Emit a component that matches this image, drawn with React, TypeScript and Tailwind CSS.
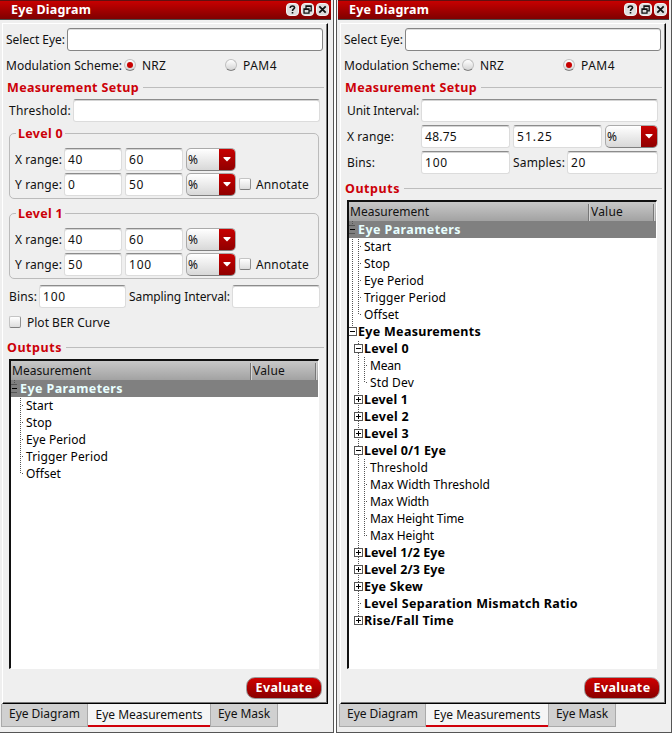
import { useLayoutEffect, useRef, useState, type ReactNode } from "react";

/** Text set to a fixed run width by evenly tracking its letters. */
function T({ children, w, className = "" }: { children: string; w: number; className?: string }) {
  const ref = useRef<HTMLSpanElement>(null);
  const [gap, setGap] = useState(0);
  useLayoutEffect(() => {
    const el = ref.current;
    if (!el) return;
    el.style.letterSpacing = "0px";
    const natural = el.getBoundingClientRect().width;
    setGap((w - natural) / children.length);
  }, [w, children]);
  return (
    <span ref={ref} className={`inline-block shrink-0 whitespace-pre leading-4 ${className}`} style={{ letterSpacing: `${gap}px` }}>
      {children}
    </span>
  );
}

function Field({ value = "", w = 0, className = "" }: { value?: string; w?: number; className?: string }) {
  return (
    <div className={`flex h-[23px] shrink-0 items-center rounded-[3px] border border-[#dcdcdc] border-t-[#8c8c8c] bg-white pl-[3px] shadow-[inset_0_1px_0_#d4d4d4] ${className}`}>
      {value && <T w={w}>{value}</T>}
    </div>
  );
}

function Combo({ className = "", arrow }: { className?: string; arrow: string }) {
  return (
    <div className={`flex h-[23px] shrink-0 overflow-hidden rounded-[5px] border border-[#aaa] border-b-[#808080] bg-gradient-to-b from-white to-[#d8d8d8] ${className}`}>
      <div className="flex flex-1 items-center pl-px"><T w={10}>%</T></div>
      <div className={`flex items-center justify-center bg-gradient-to-b from-[#c80000] to-[#900000] ${arrow}`}>
        <svg width="8" height="5" viewBox="0 0 8 5"><path d="M0.5 0H7.5V1L4 4.5L0.5 1Z" fill="#fff" /></svg>
      </div>
    </div>
  );
}

function Check() {
  return <div className="h-3 w-3 shrink-0 rounded-[2px] border border-[#c4c4c4] border-b-[#808080] border-r-[#909090] bg-gradient-to-b from-white to-[#ddd]" />;
}

function Radio({ on }: { on: boolean }) {
  return (
    <div className="flex h-3 w-3 shrink-0 items-center justify-center rounded-full border border-[#c0c0c0] border-b-[#808080] bg-gradient-to-b from-white to-[#d4d4d4]">
      {on && <div className="h-1.5 w-1.5 rounded-full bg-[#c80000]" />}
    </div>
  );
}

function Heading({ children, w }: { children: string; w: number }) {
  return (
    <div className="flex h-4 items-center pl-1 pr-[3px]">
      <T w={w} className="relative top-px text-[12.5px] font-bold text-[#cc0008]">{children}</T>
      <div className="ml-1 h-px flex-1 bg-[#bdbdbd]" />
    </div>
  );
}

function TitleButton({ children }: { children: ReactNode }) {
  return (
    <svg width="13" height="13" viewBox="0 0 13 13" fill="none" stroke="#111" className="shrink-0">
      <rect x="0.5" y="0.5" width="12" height="12" rx="3.5" fill="#dedede" stroke="#f2f2f2" />
      {children}
    </svg>
  );
}

function Level({ name, first, second, fw, sw, className }: { name: string; first: [string, string]; second: [string, string]; fw: [number, number]; sw: [number, number]; className: string }) {
  return (
    <fieldset className={`relative ml-1.5 h-[66px] w-[310px] rounded-[5px] border border-[#bbb] pl-[5px] pt-[14px] ${className}`}>
      <div className="absolute -top-[8px] left-1.5 flex bg-[#efefef] px-0.5"><T w={45} className="text-[12.5px] font-bold text-[#cc0008]">{name}</T></div>
      <div className="flex items-center">
        <T w={47}>X range:</T>
        <Field value={first[0]} w={fw[0]} className="ml-0.5 w-[58px]" />
        <Field value={first[1]} w={fw[1]} className="ml-[3px] w-[58px]" />
        <Combo className="ml-[3px] w-[50px]" arrow="w-[16px]" />
      </div>
      <div className="mt-0.5 flex items-center">
        <T w={47}>Y range:</T>
        <Field value={second[0]} w={sw[0]} className="ml-0.5 w-[58px]" />
        <Field value={second[1]} w={sw[1]} className="ml-[3px] w-[58px]" />
        <Combo className="ml-[3px] w-[50px]" arrow="w-[16px]" />
        <div className="mb-0.5 ml-[3px]"><Check /></div>
        <div className="ml-[5px] flex"><T w={53}>Annotate</T></div>
      </div>
    </fieldset>
  );
}

type Row = {
  text: string;
  w: number;
  depth: 0 | 1 | 2;
  bold?: boolean;
  box?: "plus" | "minus";
  selected?: boolean;
  /** Guide lines as [x, fromY, toY] within the 17px row. */
  lines: [number, number, number][];
  tick?: number;
};

const indent = ["w-[9px]", "w-[15px]", "w-[21px]"];

function TreeRow({ row, index }: { row: Row; index: number }) {
  const cx = row.depth === 0 ? 3 : 9;
  return (
    <div className={`flex h-[17px] items-center ${row.selected ? "bg-[#808080] text-[#e8ffff]" : "text-black"}`}>
      <svg height="17" className={`shrink-0 ${indent[row.depth]}`} shapeRendering="crispEdges" fill="none" stroke="#555">
        {row.lines.map(([x, a, b]) => (
          <path key={x} d={`M${x + 0.5} ${a}V${b}`} strokeDasharray="1 1" strokeDashoffset={(index + a) % 2} />
        ))}
        {row.tick !== undefined && <path d={`M${row.tick + 2} 8.5h1`} />}
        {row.box && !row.selected && <rect x={cx - 3.5} y="4.5" width="8" height="8" fill="#fff" />}
        {row.selected && <path d={`M0 4.5h6M0 12.5h6`} />}
        {row.box && <path d={`M${cx - 2} 8.5h5${row.box === "plus" ? `M${cx + 0.5} 6v5` : ""}`} stroke="#000" />}
      </svg>
      <T w={row.w} className={row.bold ? "text-[12.5px] font-bold" : ""}>{row.text}</T>
    </div>
  );
}

function Outputs({ rows, className }: { rows: Row[]; className: string }) {
  return (
    <div className={`ml-1.5 flex w-[310px] flex-col border-l-2 border-t-2 border-r border-b border-[#111] border-b-white border-r-white bg-white ${className}`}>
      <div className="flex h-[19px] items-center bg-gradient-to-b from-[#c8c8c8] to-[#a2a2a2]">
        <div className="flex w-[239px] pl-px"><T w={79}>Measurement</T></div>
        <div className="mt-0.5 h-[17px] w-0.5 border-l border-[#777] bg-[#d5d5d5]" />
        <div className="ml-px flex flex-1"><T w={32}>Value</T></div>
        <div className="mr-px mt-0.5 h-[17px] w-0.5 border-l border-[#777] bg-[#d5d5d5]" />
      </div>
      {rows.map((r, i) => <TreeRow key={r.text} row={r} index={i} />)}
    </div>
  );
}

function Panel({ pam, children, className }: { pam: boolean; children: ReactNode; className: string }) {
  return (
    <div className={`flex h-[733px] shrink-0 flex-col border-b border-r border-[#555] bg-[#efefef] ${className}`}>
      <div className="flex h-5 w-[331px] shrink-0 items-center border-y border-[#4a4a4a] border-t-[#601010] bg-gradient-to-b from-[#c80000] to-[#800000] pl-[11px] pr-px">
        <T w={80} className="text-[12.5px] font-bold text-white">Eye Diagram</T>
        <div className="mb-px ml-auto mr-px flex gap-0.5">
          <TitleButton><path d="M4.3 5V4.2Q4.6 3 6.5 3T8.6 4.6C8.6 6 6.5 5.9 6.5 8M6.5 9V10.6" strokeWidth="1.6" /></TitleButton>
          <TitleButton><path d="M5 6V3H10.2V7.8H8M5 3.4H10.2M3 6H8V10.2H3ZM3 6.4H8" strokeWidth="1.3" /></TitleButton>
          <TitleButton><path d="M3.3 3.3L9.7 9.7M9.7 3.3L3.3 9.7" strokeWidth="1.8" /></TitleButton>
        </div>
      </div>
      <div className="ml-0.5 mt-[3px] flex h-[681px] w-[326px] shrink-0 flex-col border-b border-l border-r border-t border-black border-l-white border-t-white shadow-[inset_-1px_-1px_0_#777]">
        <div className="mt-1 flex items-center pl-[3px]">
          <T w={59}>Select Eye:</T>
          <div className="ml-0.5 h-[23px] w-[256px] rounded-[3px] border border-[#858585] bg-white shadow-[inset_0_1px_0_#ddd]" />
        </div>
        <div className="mt-[7px] flex h-4 items-center pl-[3px]">
          <T w={116}>Modulation Scheme:</T>
          <div className="mb-0.5 ml-0.5"><Radio on={!pam} /></div>
          <div className="ml-[6px] flex w-[83px]"><T w={24}>NRZ</T></div>
          <div className="mb-0.5"><Radio on={pam} /></div>
          <div className="ml-[6px] flex"><T w={34}>PAM4</T></div>
        </div>
        <div className="mt-[5px]"><Heading w={132}>Measurement Setup</Heading></div>
        {children}
        <div className="mr-[5px] mt-[8px] flex h-[22px] w-[76px] shrink-0 items-center justify-center self-end rounded-[9px] border border-[#999] bg-gradient-to-b from-[#d00000] to-[#8a0000]">
          <T w={57} className="text-[12.5px] font-bold text-white">Evaluate</T>
        </div>
      </div>
      <div className="ml-px flex items-start">
        <div className="flex h-[23px] w-[87px] justify-center border border-t-0 border-[#aaa] bg-[#d0d0d0] pt-0.5"><T w={71}>Eye Diagram</T></div>
        <div className="flex h-[23px] w-[122px] justify-center border-b-2 border-[#d0000a] bg-[#f5f5f5] pt-[3px]"><T w={107}>Eye Measurements</T></div>
        <div className="flex h-[23px] w-[68px] justify-center border border-t-0 border-[#aaa] bg-[#d0d0d0] pt-0.5"><T w={52}>Eye Mask</T></div>
      </div>
    </div>
  );
}

const params: [string, number][] = [["Start", 27], ["Stop", 26], ["Eye Period", 60], ["Trigger Period", 82], ["Offset", 35]];

const head: Row = { text: "Eye Parameters", w: 103, depth: 0, bold: true, box: "minus", selected: true, lines: [[3, 0, 5]] };

const leftRows: Row[] = [
  head,
  ...params.map(([text, w], i): Row => ({ text, w, depth: 1, lines: [[9, 0, i === 4 ? 9 : 17]], tick: 9 })),
];

const top = (text: string, w: number, box?: "plus" | "minus", end = 17): Row => ({ text, w, depth: 1, bold: true, box, lines: [[9, 0, end]], tick: box ? undefined : 9 });
const sub = (text: string, w: number, last = false): Row => ({ text, w, depth: 2, lines: [[9, 0, 17], [15, 0, last ? 9 : 17]], tick: 15 });

const rightRows: Row[] = [
  head,
  ...params.map(([text, w], i): Row => ({ text, w, depth: 1, lines: [[3, 0, 17], [9, 0, i === 4 ? 9 : 17]], tick: 9 })),
  { text: "Eye Measurements", w: 123, depth: 0, bold: true, box: "minus", lines: [[3, 0, 5]] },
  top("Level 0", 45, "minus"),
  sub("Mean", 31),
  sub("Std Dev", 44, true),
  top("Level 1", 44, "plus"),
  top("Level 2", 45, "plus"),
  top("Level 3", 45, "plus"),
  top("Level 0/1 Eye", 82, "minus"),
  sub("Threshold", 58),
  sub("Max Width Threshold", 120),
  sub("Max Width", 59),
  sub("Max Height Time", 94),
  sub("Max Height", 64, true),
  top("Level 1/2 Eye", 81, "plus"),
  top("Level 2/3 Eye", 81, "plus"),
  top("Eye Skew", 59, "plus"),
  top("Level Separation Mismatch Ratio", 214),
  top("Rise/Fall Time", 90, "plus", 9),
];

export default function App() {
  return (
    <div className="flex h-[733px] w-[672px] overflow-hidden bg-white font-['Noto_Sans','Open_Sans',sans-serif] text-[12px] text-[#111]">
      <Panel pam={false} className="w-[334px]">
        <div className="mt-[4px] flex items-center pl-1.5">
          <T w={62}>Threshold:</T>
          <Field className="ml-0.5 w-[247px]" />
        </div>
        <Level name="Level 0" first={["40", "60"]} second={["0", "50"]} fw={[15, 15]} sw={[8, 15]} className="mt-[11px]" />
        <Level name="Level 1" first={["40", "60"]} second={["50", "100"]} fw={[15, 15]} sw={[15, 23]} className="mt-[14px]" />
        <div className="mt-1.5 flex items-center pl-1.5">
          <T w={28}>Bins:</T>
          <Field value="100" w={23} className="ml-0.5 w-[87px]" />
          <div className="ml-[3px] flex"><T w={101}>Sampling Interval:</T></div>
          <Field className="ml-0.5 w-[88px]" />
        </div>
        <div className="mt-[6px] flex h-4 items-center pl-1.5">
          <Check />
          <div className="relative top-px ml-1.5 flex"><T w={83}>Plot BER Curve</T></div>
        </div>
        <div className="mt-[9px]"><Heading w={55}>Outputs</Heading></div>
        <Outputs rows={leftRows} className="mt-1 h-[310px]" />
      </Panel>
      <Panel pam className="ml-0.5 w-[336px] border-l pl-px">
        <div className="mt-[4px] flex items-center pl-1.5">
          <T w={72}>Unit Interval:</T>
          <Field className="ml-0.5 w-[237px]" />
        </div>
        <div className="mt-[3px] flex items-center pl-1.5">
          <div className="flex w-[74px]"><T w={47}>X range:</T></div>
          <Field value="48.75" w={32} className="w-[89px]" />
          <Field value="51.25" w={36} className="ml-[3px] w-[89px]" />
          <Combo className="ml-[3px] w-[53px]" arrow="w-[16px]" />
        </div>
        <div className="mt-[3px] flex items-center pl-1.5">
          <div className="flex w-[74px]"><T w={28}>Bins:</T></div>
          <Field value="100" w={23} className="w-[89px]" />
          <div className="ml-[3px] flex"><T w={52}>Samples:</T></div>
          <Field value="20" w={15} className="ml-0.5 w-[91px]" />
        </div>
        <div className="mt-1.5"><Heading w={55}>Outputs</Heading></div>
        <Outputs rows={rightRows} className="mt-1 h-[469px]" />
      </Panel>
    </div>
  );
}
